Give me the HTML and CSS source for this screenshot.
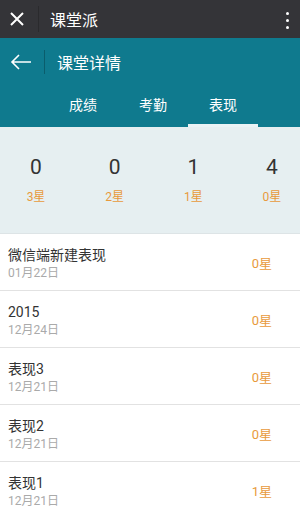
FILE: index.html
```html
<!DOCTYPE html>
<html lang="zh">
<head>
<meta charset="utf-8">
<link rel="stylesheet" href="styles.css">
</head>
<body>
<div class="topbar">
  <svg class="close" width="14" height="14" viewBox="0 0 14 14"><path d="M1 1L13 13M13 1L1 13" stroke="#fff" stroke-width="2" fill="none"/></svg>
  <span class="topdiv"></span>
  <span class="toptitle">课堂派</span>
  <span class="more"><i></i><i></i><i></i></span>
</div>
<div class="header">
  <div class="hrow">
    <svg class="back" width="22" height="16" viewBox="0 0 22 16"><path d="M21 8H2M9 1L2 8L9 15" stroke="#fff" stroke-width="1.6" fill="none"/></svg>
    <span class="hdiv"></span>
    <span class="htitle">课堂详情</span>
  </div>
  <div class="tabs">
    <div class="tab">成绩</div>
    <div class="tab">考勤</div>
    <div class="tab active">表现</div>
  </div>
</div>
<div class="stats">
  <div class="stat"><div class="num">0</div><div class="lbl">3星</div></div>
  <div class="stat"><div class="num">0</div><div class="lbl">2星</div></div>
  <div class="stat"><div class="num">1</div><div class="lbl">1星</div></div>
  <div class="stat"><div class="num">4</div><div class="lbl">0星</div></div>
</div>
<div class="list">
  <div class="row"><div class="info"><div class="name">微信端新建表现</div><div class="date">01月22日</div></div><div class="star">0星</div></div>
  <div class="row"><div class="info"><div class="name">2015</div><div class="date">12月24日</div></div><div class="star">0星</div></div>
  <div class="row"><div class="info"><div class="name">表现3</div><div class="date">12月21日</div></div><div class="star">0星</div></div>
  <div class="row"><div class="info"><div class="name">表现2</div><div class="date">12月21日</div></div><div class="star">0星</div></div>
  <div class="row"><div class="info"><div class="name">表现1</div><div class="date">12月21日</div></div><div class="star">1星</div></div>
</div>
</body>
</html>
```
FILE: styles.css
```css
* { box-sizing: border-box; margin: 0; padding: 0; }
body {
  width: 300px;
  height: 511px;
  overflow: hidden;
  background: #fff;
  font-family: Roboto, "Noto Sans CJK SC", sans-serif;
  color: #333;
}
.topbar {
  height: 38px;
  background: #343438;
  display: flex;
  align-items: center;
  padding-left: 10px;
}
.close { display: block; }
.topdiv {
  width: 1px;
  height: 26px;
  background: #2a2a2d;
  margin-left: 14px;
}
.toptitle {
  color: #fff;
  font-size: 16px;
  margin-left: 11px;
}
.more {
  margin-left: auto;
  margin-right: 11px;
  display: flex;
  flex-direction: column;
  gap: 4px;
  padding-top: 2px;
}
.more i {
  display: block;
  width: 3px;
  height: 3px;
  background: #fff;
  border-radius: 50%;
}
.header {
  background: #0f7a8e;
  height: 89px;
  display: flex;
  flex-direction: column;
}
.hrow {
  height: 48px;
  display: flex;
  align-items: center;
  padding-left: 10px;
}
.back { display: block; }
.hdiv {
  width: 1px;
  height: 24px;
  background: #0a5d6c;
  margin-left: 12px;
}
.htitle {
  color: #fff;
  font-size: 16px;
  margin-left: 12px;
}
.tabs {
  display: flex;
  padding-left: 48px;
  margin-top: auto;
}
.tab {
  width: 70px;
  text-align: center;
  color: #fff;
  font-size: 14px;
  height: 41px;
  line-height: 38px;
  border-bottom: 3px solid transparent;
}
.tab.active { border-bottom-color: #eaf3f5; }
.stats {
  background: #e6eff1;
  height: 107px;
  display: flex;
  justify-content: space-between;
  padding: 27px 14px 0 22px;
  border-bottom: 1px solid #dde4e6;
}
.stat {
  width: 28px;
  text-align: center;
  display: flex;
  flex-direction: column;
  align-items: center;
}
.num {
  font-size: 21px;
  line-height: 26px;
  color: #333;
  white-space: nowrap;
}
.lbl {
  font-size: 12px;
  line-height: 16px;
  margin-top: 9px;
  color: #e89a3c;
  white-space: nowrap;
}
.row {
  height: 57px;
  display: flex;
  align-items: center;
  padding: 0 28px 0 8px;
  border-bottom: 1px solid #e2e2e2;
}
.info { flex: 1; padding-top: 2px; }
.name {
  font-size: 14px;
  line-height: 18px;
  color: #333;
}
.date {
  font-size: 12px;
  line-height: 16px;
  color: #aaa;
  margin-top: 1px;
}
.star {
  font-size: 13px;
  color: #e89a3c;
}
```
